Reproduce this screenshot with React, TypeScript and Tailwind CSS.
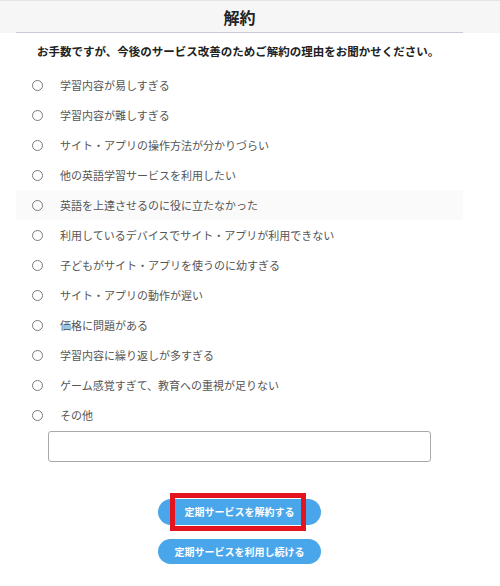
const reasons = [
  "学習内容が易しすぎる",
  "学習内容が難しすぎる",
  "サイト・アプリの操作方法が分かりづらい",
  "他の英語学習サービスを利用したい",
  "英語を上達させるのに役に立たなかった",
  "利用しているデバイスでサイト・アプリが利用できない",
  "子どもがサイト・アプリを使うのに幼すぎる",
  "サイト・アプリの動作が遅い",
  "価格に問題がある",
  "学習内容に繰り返しが多すぎる",
  "ゲーム感覚すぎて、教育への重視が足りない",
  "その他",
];

const font = { fontFamily: '"Noto Sans CJK JP", "Noto Sans", sans-serif' };

const App = () => {
  return (
    <div className="w-[500px] h-[586px] bg-white overflow-hidden" style={font}>
      <div className="bg-[#f6f6f6] border-t border-[#e6e6e6]">
        <div className="ml-[16px] w-[447px] h-[32px] flex items-center justify-center border-b border-[#c8ccd4]">
          <h1 className="text-[16px] font-bold text-[#222] leading-none">解約</h1>
        </div>
      </div>

      <div className="ml-[16px] w-[447px] flex flex-col">
        <p className="mt-[9px] h-[18px] pl-[21px] text-[11.5px] font-bold text-[#222] leading-[18px] whitespace-nowrap">
          お手数ですが、今後のサービス改善のためご解約の理由をお聞かせください。
        </p>

        <ul className="mt-[10px] flex flex-col">
          {reasons.map((r, i) => (
            <li
              key={r}
              className={`h-[30px] flex items-center pl-[16px] ${i === 4 ? "bg-[#fafafa]" : ""}`}
            >
              <span className="w-[11px] h-[11px] rounded-full border-[1.5px] border-[#7a7a7a]" />
              <span className="ml-[17px] text-[11px] text-[#555] leading-none">{r}</span>
            </li>
          ))}
        </ul>

        <div className="pl-[32px] mt-[1px]">
          <div className="w-[383px] h-[31px] border border-[#a9a9a9] rounded-[3px] bg-white" />
        </div>

        <div className="mt-[37px] flex flex-col items-center gap-[14px]">
          <div className="relative w-[163px] h-[26px] rounded-full bg-[#4aa6ea] flex items-center justify-center">
            <span className="text-[10px] font-bold text-white leading-none">定期サービスを解約する</span>
            <div className="absolute left-[12px] top-[-6px] w-[136px] h-[38px] border-[5px] border-[#e3141d]" />
          </div>
          <div className="w-[163px] h-[25px] rounded-full bg-[#4aa6ea] flex items-center justify-center">
            <span className="text-[10px] font-bold text-white leading-none">定期サービスを利用し続ける</span>
          </div>
        </div>
      </div>
    </div>
  );
};

export default App;
